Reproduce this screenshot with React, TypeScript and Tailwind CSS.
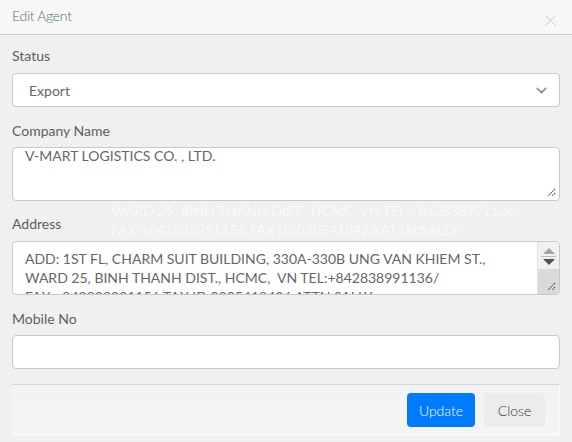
import { ChevronDown, X } from 'lucide-react';

const font = { fontFamily: 'Lato, "Open Sans", sans-serif' };

function Label({ children }: { children: React.ReactNode }) {
  return <div className="text-[14px] leading-[20px] text-[#5e5e5e]">{children}</div>;
}

function ResizeGrip() {
  return (
    <svg width="10" height="10" viewBox="0 0 10 10" className="absolute right-[3px] bottom-[3px]">
      <path d="M9 2 L2 9 M9 6 L6 9" stroke="#555" strokeWidth="1.2" strokeDasharray="1.5 0.8" />
    </svg>
  );
}

export default function App() {
  return (
    <div className="w-[572px] h-[442px] bg-[#f0f0f0] overflow-hidden relative" style={font}>
      <div className="h-[35px] bg-[#f7f7f7] border-b border-[#cfcfcf] flex items-center justify-between pl-[12px] pr-[12px]">
        <span className="text-[14px] font-light text-[#4f7564] tracking-[-0.3px] -mt-[3px]">Edit Agent</span>
        <X size={19} strokeWidth={1} className="text-[#bdbdbd] mt-[7px]" />
      </div>

      <div className="px-[12px] pt-[11px] flex flex-col">
        <Label>Status</Label>
        <div className="mt-[7px] h-[34px] bg-white border border-[#c9c9c9] rounded-[4px] flex items-center justify-between pl-[16px] pr-[9px]">
          <span className="text-[14px] text-[#666]">Export</span>
          <ChevronDown size={17} strokeWidth={2} className="text-[#888]" />
        </div>

        <div className="mt-[14px]"><Label>Company Name</Label></div>
        <div className="relative mt-[6px] h-[54px] bg-white border border-[#c9c9c9] rounded-[4px] pl-[12px]">
          <div className="text-[14px] leading-[16px] text-[#666]">V-MART LOGISTICS CO. , LTD.</div>
          <ResizeGrip />
        </div>

        <div className="mt-[13px]"><Label>Address</Label></div>
        <div className="relative mt-[7px] h-[54px] bg-white border border-[#c9c9c9] rounded-[4px] overflow-hidden flex">
          <div className="flex-1 pl-[12px] pt-[7px] text-[14px] leading-[19px] text-[#666] whitespace-pre">
            {'ADD: 1ST FL, CHARM SUIT BUILDING, 330A-330B UNG VAN KHIEM ST.,\nWARD 25, BINH THANH DIST., HCMC,  VN TEL:+842838991136/\nFAX:+842838991156 TAX ID:0305418426 ATTN:SALLY'}
          </div>
          <div className="w-[22px] bg-[#f1f1f1] flex flex-col border-l border-[#e2e2e2]">
            <div className="h-[12px] flex items-end justify-center">
              <div className="w-0 h-0 border-l-[6px] border-r-[6px] border-b-[6px] border-l-transparent border-r-transparent border-b-[#a3a3a3]" />
            </div>
            <div className="mx-[3px] mt-[2px] border-t border-[#bdbdbd]" />
            <div className="h-[10px] flex items-start justify-center pt-[2px]">
              <div className="w-0 h-0 border-l-[6px] border-r-[6px] border-t-[6px] border-l-transparent border-r-transparent border-t-[#505050]" />
            </div>
            <div className="flex-1 bg-[#dadada] mt-[2px]" />
          </div>
          <ResizeGrip />
        </div>

        <div className="mt-[14px]"><Label>Mobile No</Label></div>
        <div className="mt-[6px] h-[34px] bg-white border border-[#c9c9c9] rounded-[4px]" />

        <div className="mt-[15px] h-[52px] border-t border-[#d4d4d4] bg-gradient-to-b from-[#f2f2f2] to-[#f5f5f5] border-b border-b-[#fafafa] border-r border-r-[#fafafa] flex items-center justify-end gap-[9px] pr-[14px]">
          <button className="h-[34px] w-[68px] bg-[#007bff] rounded-[4px] text-white text-[14px] font-light">Update</button>
          <button className="h-[34px] w-[61px] bg-[#ececec] rounded-[4px] text-[#333] text-[14px] font-light">Close</button>
        </div>
      </div>

      <div className="absolute left-[111px] top-[201px] text-[14px] leading-[19px] text-[#f9f9f9] whitespace-pre pointer-events-none">
        {'WARD 25, BINH THANH DIST., HCMC, VN TEL:+842838991136/\nFAX:+842838991156 TAX ID:0305418426 ATTN:SALLY'}
      </div>
    </div>
  );
}
